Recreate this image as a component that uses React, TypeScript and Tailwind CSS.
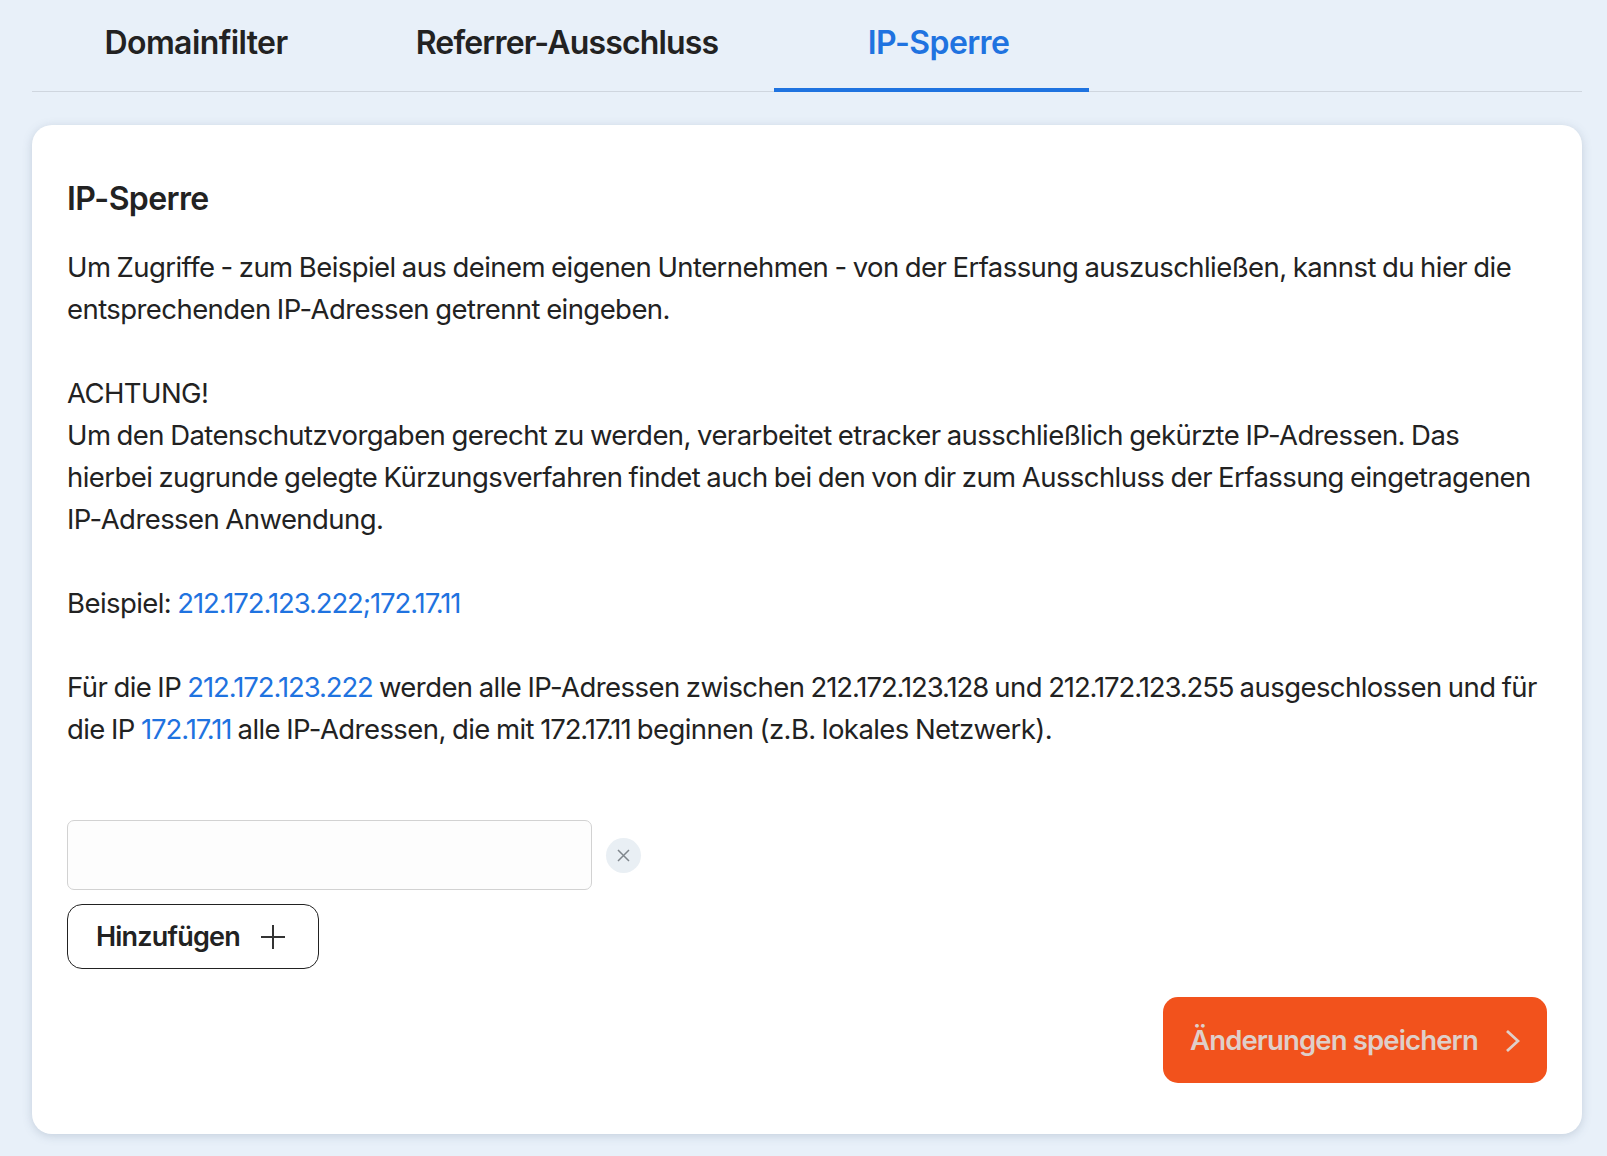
import React from "react";

const Blue = ({ children }: { children: React.ReactNode }) => (
  <span className="tracking-[-1.1px] text-[#1f73e0]">{children}</span>
);
const Num = ({ children }: { children: React.ReactNode }) => (
  <span className="tracking-[-1.1px]">{children}</span>
);

export default function App() {
  return (
    <div className="min-h-[1156px] w-full bg-[#e8f0f9] pl-[32px] pr-[25px] font-['Inter','Liberation_Sans',sans-serif] text-[#222222]">
      <div className="flex h-[92px] border-b border-[#cfd6df]">
        <div className="flex h-[92px] w-[328px] items-center justify-center pb-[6px] text-[32px] font-semibold tracking-[-0.6px]">
          Domainfilter
        </div>
        <div className="flex h-[92px] w-[414px] items-center justify-center pb-[6px] text-[32px] font-semibold tracking-[-0.85px]">
          Referrer-Ausschluss
        </div>
        <div className="flex h-[92px] w-[315px] items-center justify-center border-b-[4px] border-[#1f73e0] pb-[2px] pl-[14px] text-[32px] font-semibold tracking-[-0.6px] text-[#1f73e0]">
          IP-Sperre
        </div>
      </div>
      <div className="mt-[33px] flex h-[1009px] flex-col rounded-[20px] bg-white px-[35px] pb-[51px] pt-[53px] shadow-[0_2px_10px_rgba(90,110,140,0.25)]">
        <h2 className="h-[40px] text-[32px] font-semibold leading-[42px] tracking-[-0.6px]">IP-Sperre</h2>
        <div className="mt-[28px] whitespace-nowrap text-[27.5px] leading-[42px] tracking-[-0.57px] [word-spacing:-1px]">
          Um Zugriffe - zum Beispiel aus deinem eigenen Unternehmen - von der Erfassung auszuschließen, kannst du hier die
          <br />
          entsprechenden IP-Adressen getrennt eingeben.
          <br />
          <br />
          ACHTUNG!
          <br />
          Um den Datenschutzvorgaben gerecht zu werden, verarbeitet etracker ausschließlich gekürzte IP-Adressen. Das
          <br />
          hierbei zugrunde gelegte Kürzungsverfahren findet auch bei den von dir zum Ausschluss der Erfassung eingetragenen
          <br />
          IP-Adressen Anwendung.
          <br />
          <br />
          Beispiel: <Blue>212.172.123.222;172.17.11</Blue>
          <br />
          <br />
          Für die IP <Blue>212.172.123.222</Blue> werden alle IP-Adressen zwischen <Num>212.172.123.128</Num> und <Num>212.172.123.255</Num> ausgeschlossen und für
          <br />
          die IP <Blue>172.17.11</Blue> alle IP-Adressen, die mit <Num>172.17.11</Num> beginnen (z.B. lokales Netzwerk).
        </div>
        <div className="mt-[70px] flex items-center gap-[14px]">
          <input className="h-[70px] w-[525px] rounded-[7px] border border-[#d2d2d2] bg-[#fdfdfd]" />
          <div className="flex h-[35px] w-[35px] items-center justify-center rounded-full bg-[#e9eff4]">
            <svg width="15" height="15" viewBox="0 0 15 15" fill="none" stroke="#7f868c" strokeWidth="1.5">
              <path d="M2 2 13 13M13 2 2 13" />
            </svg>
          </div>
        </div>
        <button className="mt-[14px] flex h-[65px] w-[252px] items-center gap-[21px] rounded-[15px] border border-[#222222] pl-[28px] pt-[2px] text-[27px] font-semibold tracking-[-0.8px]">
          Hinzufügen
          <svg className="-mt-[2px]" width="24" height="24" viewBox="0 0 24 24" fill="none" stroke="#333333" strokeWidth="2">
            <path d="M12 0V24M0 12H24" />
          </svg>
        </button>
        <div className="mt-[28px] flex justify-end">
          <button className="flex h-[86px] w-[384px] items-center rounded-[15px] bg-[#f2521c] pl-[27px] pt-[1px] text-[27.5px] font-semibold tracking-[-0.85px] text-[#dfcfc9]">
            Änderungen speichern
            <svg className="ml-[27px]" width="15" height="24" viewBox="0 0 15 24" fill="none" stroke="#dfcfc9" strokeWidth="2.8">
              <path d="M2 2 13 12 2 22" />
            </svg>
          </button>
        </div>
      </div>
    </div>
  );
}
